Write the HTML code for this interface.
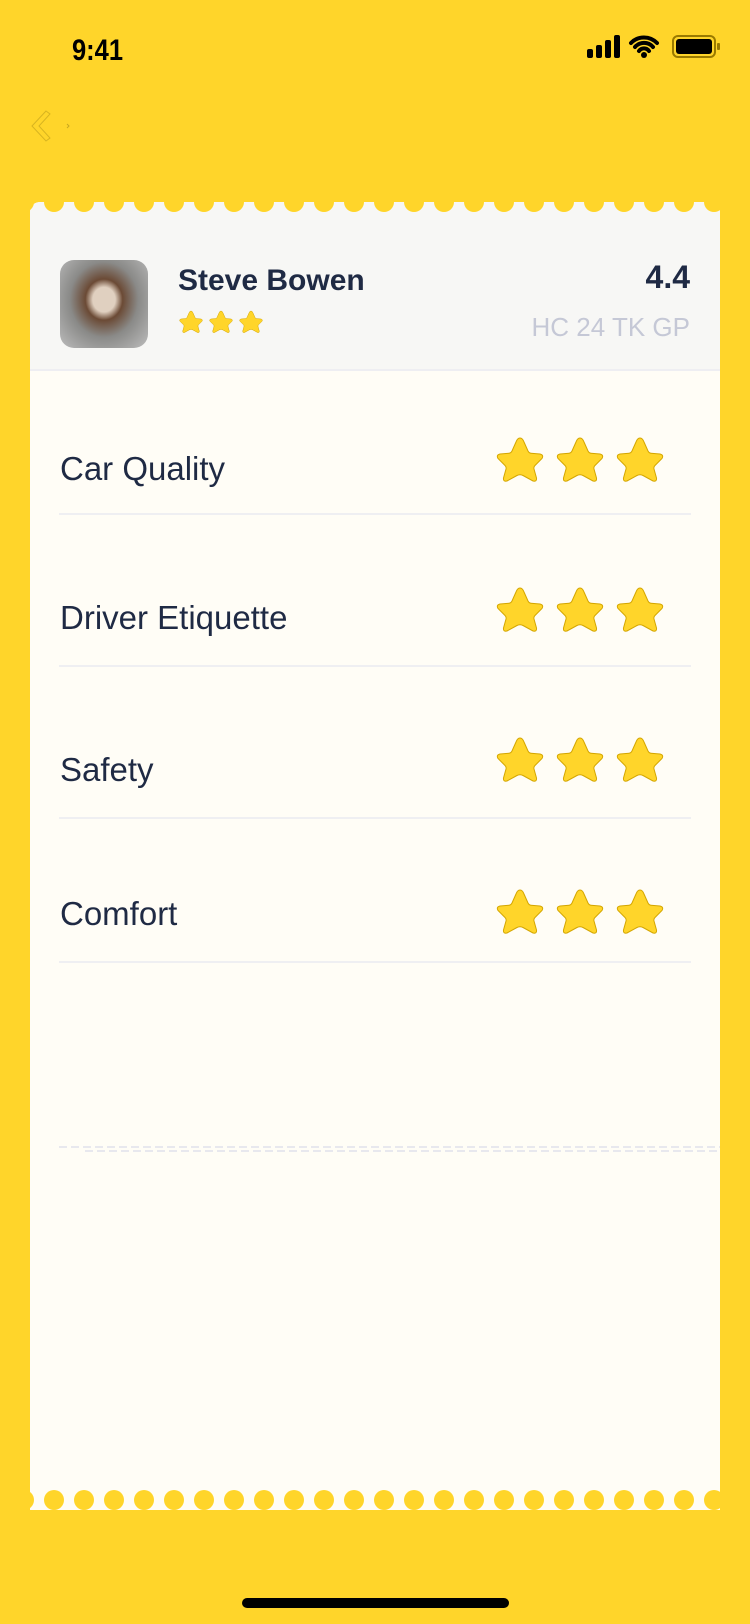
<!DOCTYPE html>
<html><head><meta charset="utf-8"><style>
*{margin:0;padding:0;box-sizing:border-box}
body{width:750px;height:1624px;background:#FFD52A;position:relative;overflow:hidden;font-family:"Liberation Sans","DejaVu Sans",sans-serif;color:#1f2a44}
.abs{position:absolute}
.card{position:absolute;left:30px;top:202px;width:690px;height:1308px;background:#FFFDF6;border-radius:10px 10px 0 0;overflow:hidden}
.hdr{position:absolute;left:0;top:0;width:690px;height:169px;background:#F7F7F5;border-bottom:2px solid #eeeef2}
.lbl{position:absolute;left:30px;font-size:33px;color:#1f2a44}
.div{position:absolute;left:29px;width:632px;height:2px;background:#efeff2}
.dash{position:absolute;height:2px;background:repeating-linear-gradient(90deg,#e8e8ee 0 8px,transparent 8px 12px)}
</style></head><body>
<div class="abs" style="left:72px;top:34px;font-size:30px;font-weight:bold;color:#000;transform:scaleX(.85);transform-origin:left">9:41</div>
<svg class="abs" style="left:585px;top:34px" width="136" height="26" viewBox="0 0 136 26">
<rect x="2" y="15" width="6" height="9" rx="2" fill="#000"/><rect x="11" y="11" width="6" height="13" rx="2" fill="#000"/><rect x="20" y="6" width="6" height="18" rx="2" fill="#000"/><rect x="29" y="1" width="6" height="23" rx="2" fill="#000"/>
<path d="M46 9a18 18 0 0 1 26 0M50 13a12 12 0 0 1 18 0M54 17a6 6 0 0 1 10 0" stroke="#000" stroke-width="4" fill="none" stroke-linecap="round"/><circle cx="59" cy="21" r="3" fill="#000"/>
<rect x="88" y="2" width="42" height="21" rx="5" fill="none" stroke="#9a7a00" stroke-width="2"/><rect x="91" y="5" width="36" height="15" rx="3" fill="#000"/><rect x="132" y="9" width="3" height="7" rx="1" fill="#9a7a00"/>
</svg>
<svg class="abs" style="left:28px;top:108px" width="44" height="36"><path d="M18 3 L4 18 L18 33 L22 30 L11 18 L22 6 Z" fill="none" stroke="#d8b420" stroke-width="1"/><path d="M39 16l2 2-2 2" fill="none" stroke="#c9a820" stroke-width="1"/></svg>
<svg width="0" height="0" style="position:absolute"><defs><path id="s" d="M24 2 Q26.5 2 28 6 L32 15 Q33 17 35 17.2 L44 18 Q48 19 46 22.5 L39 29.5 Q37.5 31 38 33 L40.5 42 Q41 46 37 45 L27 39.5 Q24 38 21 39.5 L11 45 Q7 46 7.5 42 L10 33 Q10.5 31 9 29.5 L2 22.5 Q0 19 4 18 L13 17.2 Q15 17 16 15 L20 6 Q21.5 2 24 2Z" fill="#FFD52A" stroke="#d4a600" stroke-width="1"/></defs></svg>
<div class="card">
<div class="hdr">
<div class="abs" style="left:30px;top:58px;width:88px;height:88px;border-radius:14px;background:radial-gradient(ellipse at 50% 45%,#e0d0c0 0 18%,#6b4a35 30%,#8a8a88 55%,#bdbdbd 100%)"></div>
<div class="abs" style="left:148px;top:62px;font-size:30px;font-weight:bold;color:#1f2a44">Steve Bowen</div>
<svg class="abs" style="left:149px;top:108px" width="90" height="26"><g transform="scale(.5)"><use href="#s"/><use href="#s" x="60"/><use href="#s" x="120"/></g></svg>
<div class="abs" style="right:30px;top:57px;font-size:32px;font-weight:bold;color:#1f2a44">4.4</div>
<div class="abs" style="right:30px;top:110px;font-size:26px;color:#c5c8d6">HC 24 TK GP</div>
</div>
<div class="lbl" style="top:248px">Car Quality</div><div class="div" style="top:311px"></div>
<div class="lbl" style="top:397px">Driver Etiquette</div><div class="div" style="top:463px"></div>
<div class="lbl" style="top:549px">Safety</div><div class="div" style="top:615px"></div>
<div class="lbl" style="top:693px">Comfort</div><div class="div" style="top:759px"></div>
<svg class="abs" style="left:466px;top:234px" width="170" height="520">
<g><use href="#s"/><use href="#s" x="60"/><use href="#s" x="120"/></g>
<g transform="translate(0,150)"><use href="#s"/><use href="#s" x="60"/><use href="#s" x="120"/></g>
<g transform="translate(0,300)"><use href="#s"/><use href="#s" x="60"/><use href="#s" x="120"/></g>
<g transform="translate(0,452)"><use href="#s"/><use href="#s" x="60"/><use href="#s" x="120"/></g>
</svg>
<div class="dash" style="left:29px;top:944px;width:661px"></div>
<div class="dash" style="left:55px;top:948px;width:635px"></div>
</div>
<svg class="abs" style="left:0;top:190px" width="750" height="24">
<g fill="#FFD52A">
<circle cx="24" cy="12" r="10"/><circle cx="54" cy="12" r="10"/><circle cx="84" cy="12" r="10"/><circle cx="114" cy="12" r="10"/><circle cx="144" cy="12" r="10"/><circle cx="174" cy="12" r="10"/><circle cx="204" cy="12" r="10"/><circle cx="234" cy="12" r="10"/><circle cx="264" cy="12" r="10"/><circle cx="294" cy="12" r="10"/><circle cx="324" cy="12" r="10"/><circle cx="354" cy="12" r="10"/><circle cx="384" cy="12" r="10"/><circle cx="414" cy="12" r="10"/><circle cx="444" cy="12" r="10"/><circle cx="474" cy="12" r="10"/><circle cx="504" cy="12" r="10"/><circle cx="534" cy="12" r="10"/><circle cx="564" cy="12" r="10"/><circle cx="594" cy="12" r="10"/><circle cx="624" cy="12" r="10"/><circle cx="654" cy="12" r="10"/><circle cx="684" cy="12" r="10"/><circle cx="714" cy="12" r="10"/>
</g></svg>
<svg class="abs" style="left:0;top:1489px" width="750" height="22">
<g fill="#FFD52A">
<ellipse cx="24" cy="11" rx="10" ry="10"/><ellipse cx="54" cy="11" rx="10" ry="10"/><ellipse cx="84" cy="11" rx="10" ry="10"/><ellipse cx="114" cy="11" rx="10" ry="10"/><ellipse cx="144" cy="11" rx="10" ry="10"/><ellipse cx="174" cy="11" rx="10" ry="10"/><ellipse cx="204" cy="11" rx="10" ry="10"/><ellipse cx="234" cy="11" rx="10" ry="10"/><ellipse cx="264" cy="11" rx="10" ry="10"/><ellipse cx="294" cy="11" rx="10" ry="10"/><ellipse cx="324" cy="11" rx="10" ry="10"/><ellipse cx="354" cy="11" rx="10" ry="10"/><ellipse cx="384" cy="11" rx="10" ry="10"/><ellipse cx="414" cy="11" rx="10" ry="10"/><ellipse cx="444" cy="11" rx="10" ry="10"/><ellipse cx="474" cy="11" rx="10" ry="10"/><ellipse cx="504" cy="11" rx="10" ry="10"/><ellipse cx="534" cy="11" rx="10" ry="10"/><ellipse cx="564" cy="11" rx="10" ry="10"/><ellipse cx="594" cy="11" rx="10" ry="10"/><ellipse cx="624" cy="11" rx="10" ry="10"/><ellipse cx="654" cy="11" rx="10" ry="10"/><ellipse cx="684" cy="11" rx="10" ry="10"/><ellipse cx="714" cy="11" rx="10" ry="10"/>
</g></svg>
<div class="abs" style="left:242px;top:1598px;width:267px;height:10px;border-radius:5px;background:#000"></div>
</body></html>
